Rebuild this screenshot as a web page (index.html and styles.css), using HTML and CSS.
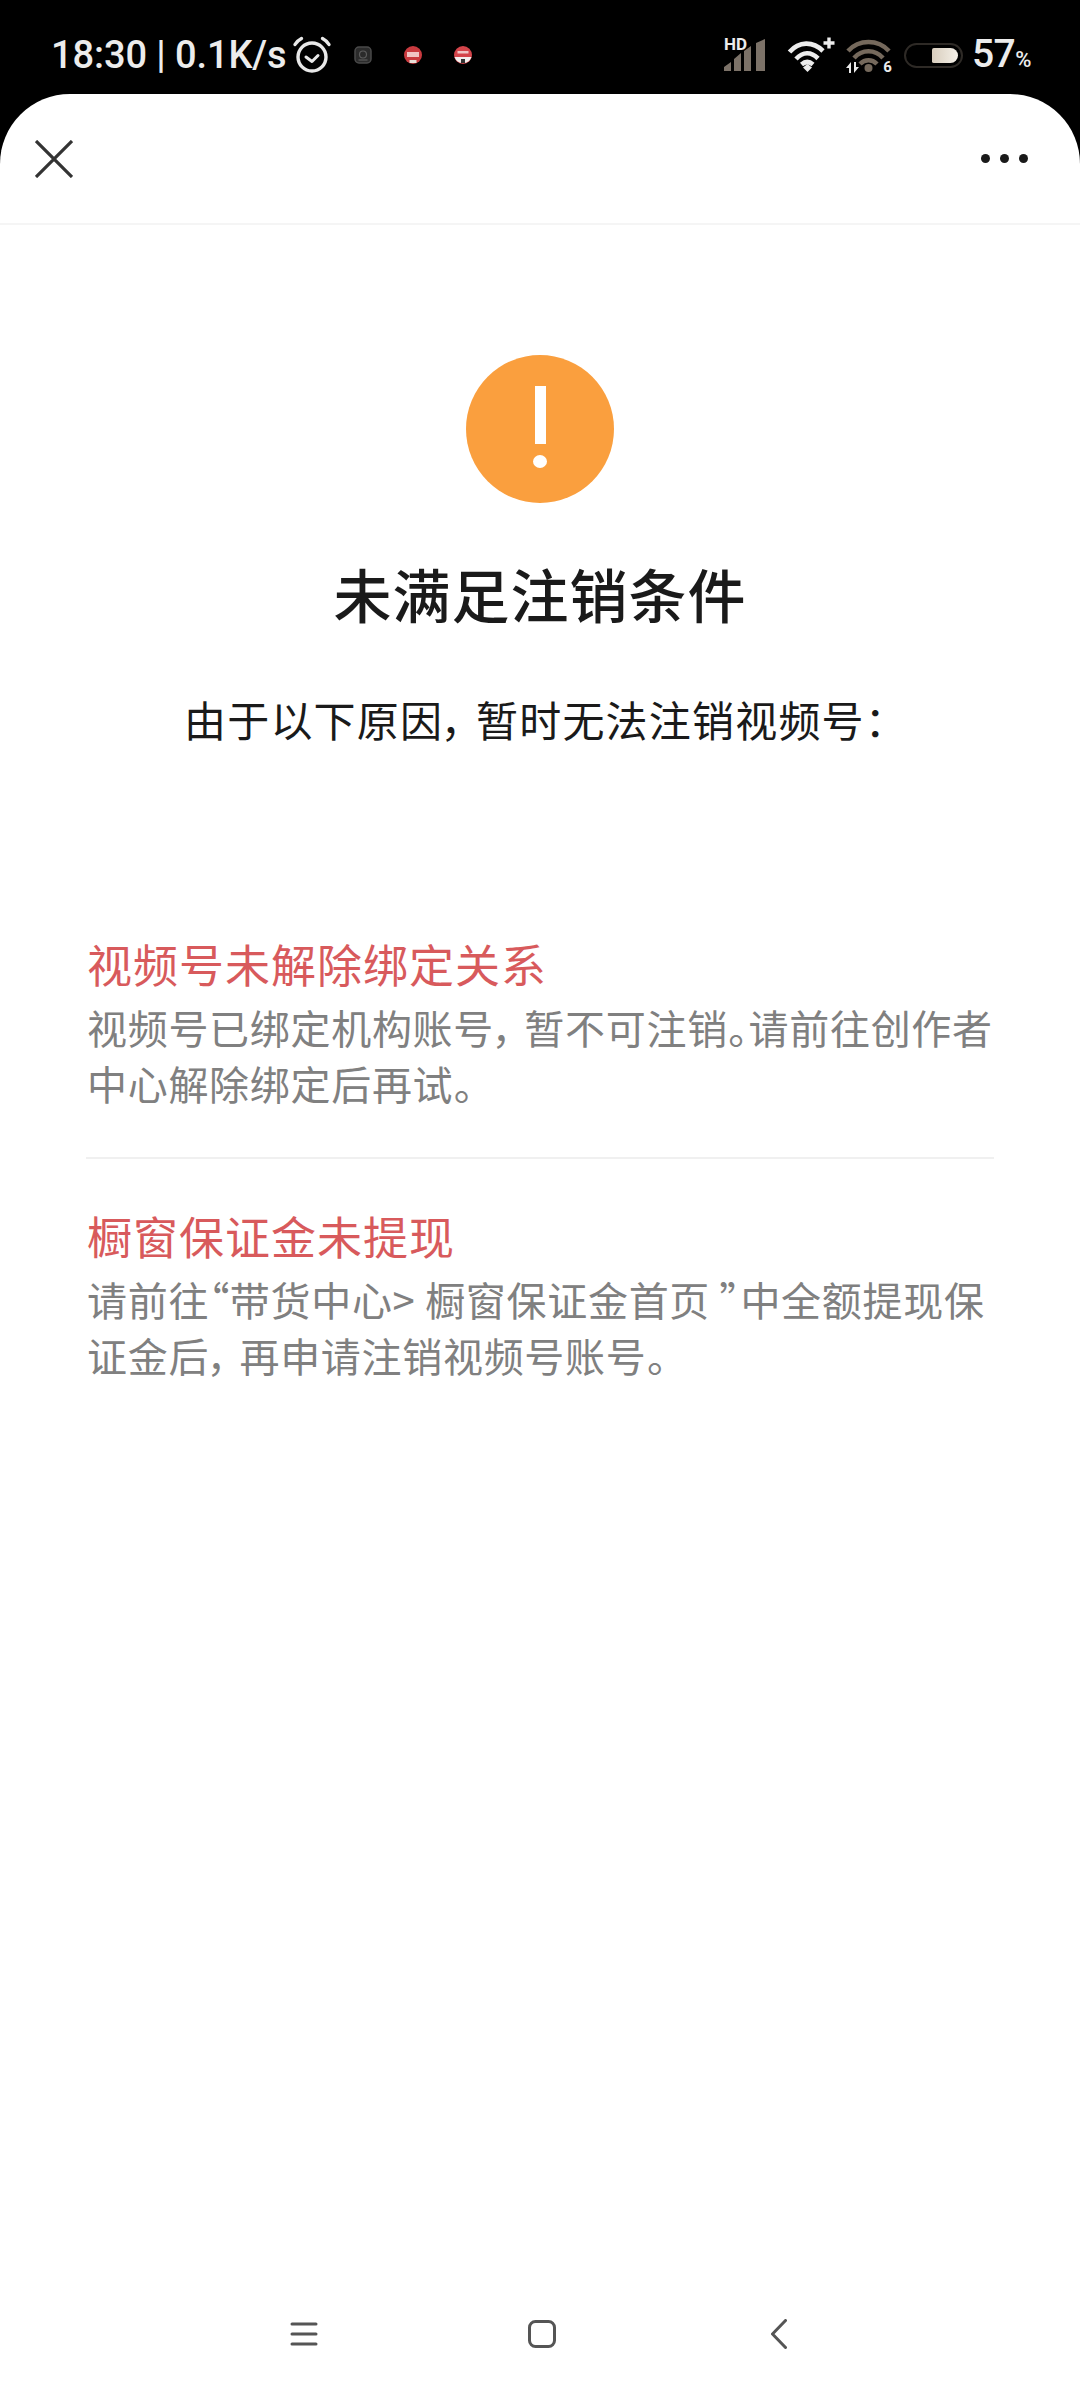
FILE: index.html

```html
<!DOCTYPE html>
<html lang="zh-CN">
  <head>
    <meta charset="UTF-8" />
    <meta name="viewport" content="width=device-width, initial-scale=1.0" />
    <title>未满足注销条件</title>
    <link rel="stylesheet" href="styles.css">
  </head>
  <body>
    <div class="screen">
      <div class="status">
        <div class="status-left">
          <span class="clock">18:30 | 0.1K/s</span>
          <svg class="alarm" width="40" height="40" viewBox="0 0 40 40" fill="none" stroke="#e8e8e8" stroke-linecap="round">
            <circle cx="20" cy="22" r="14" stroke-width="3.4" />
            <path d="M14 22l6 4.5 6-6" stroke-width="3" stroke-linejoin="round" />
            <path d="M3 9.5C4.5 7 7 4.800 9.500 3.500M37 9.500C35.500 7 33 4.800 30.500 3.500" stroke-width="3.400" />
          </svg>
          <svg class="note note-grey" width="18" height="18" viewBox="0 0 18 18" fill="none">
            <rect x="1" y="1" width="16" height="16" rx="4" fill="#2b2b2b" stroke="#4a4a4a" stroke-width="1.500" />
            <circle cx="9" cy="8.500" r="3.500" stroke="#5c5c5c" stroke-width="1.200" />
            <path d="M4.500 14h9" stroke="#5c5c5c" stroke-width="1.200" />
          </svg>
          <svg class="note" width="18" height="18" viewBox="0 0 18 18">
            <circle cx="9" cy="9" r="9" fill="#c93a3f" />
            <rect x="3" y="6" width="12" height="5" fill="#f0c4c4" />
            <rect x="5.500" y="14" width="7" height="3" fill="#e9e0d8" />
          </svg>
          <svg class="note" width="18" height="18" viewBox="0 0 18 18">
            <circle cx="9" cy="9" r="9" fill="#d4444a" />
            <path d="M0.500 11h17a9 9 0 0 1-17 0z" fill="#f3efee" />
            <rect x="3.500" y="5" width="11" height="2.500" fill="#f0c4c4" />
            <rect x="7" y="13" width="4" height="4" fill="#333" />
          </svg>
        </div>
        <div class="status-right">
          <div class="signal">
            <span class="hd">HD</span>
            <svg width="43" height="32" viewBox="0 0 43 32" fill="#7c7268">
              <path d="M0 32v-4l7-5v9zM10 32V20l7-6v18zM20 32V12l7-5v25zM32 32V4l9-4v32z" />
            </svg>
          </div>
          <svg class="wifi" width="49" height="36" viewBox="0 0 49 36" fill="none" stroke="#ececec" stroke-width="4.600">
            <path d="M2.500 15C12 4 26 4 36 14M9 22C16 14.500 24 14.500 31 21.500" />
            <path d="M14.500 27.500C18.500 24 22 24 26 27.500" />
            <path d="M16 30.500l4.500-3.500 4.500 3.500-4.500 4.500z" fill="#ececec" stroke="none" />
            <path d="M42 0.500v11M36.500 6h11" stroke-width="3.400" />
          </svg>
          <div class="wifi2">
            <svg width="45" height="35" viewBox="0 0 45 35" fill="none" stroke="#75695c" stroke-width="4.500">
              <path d="M2 13C13 1 32 1 43 13M8 20C16 11 29 11 37 20M14 26C19 21 26 21 31 26" />
              <circle cx="22.500" cy="30" r="4" fill="#75695c" stroke="none" />
            </svg>
            <span class="wifi-six">6</span>
            <svg class="wifi-arrows" width="13" height="11" viewBox="0 0 13 11" fill="#e8e8e8">
              <path d="M3 3v8h2V0L0 6h3zM10 8V0H8v11l5-6h-3z" />
            </svg>
          </div>
          <div class="battery"><div class="battery-fill"></div></div>
          <div class="percent">57<span class="percent-sign">%</span></div>
        </div>
      </div>

      <div class="sheet">
        <div class="topbar">
          <svg width="38" height="38" viewBox="0 0 38 38" stroke="#333" stroke-width="3.200">
            <path d="M1 1l36 36M37 1L1 37" />
          </svg>
          <div class="dots"><span></span><span></span><span></span></div>
        </div>

        <div class="content">
          <div class="warn">
            <div class="warn-bar"></div>
            <div class="warn-dot"></div>
          </div>
          <h1 class="title">未满足注销条件</h1>
          <p class="subtitle">由于以下原因， 暂时无法注销视频号：</p>

          <div class="reasons">
            <div class="reason">
              <h2>视频号未解除绑定关系</h2>
              <p>视频号已绑定机构账号， 暂不可注销。请前往创作者中心解除绑定后再试。</p>
            </div>
            <div class="reason">
              <h2>橱窗保证金未提现</h2>
              <p>请前往“带货中心&gt; 橱窗保证金首页 ”中全额提现保证金后， 再申请注销视频号账号。</p>
            </div>
          </div>
        </div>

        <div class="navbar">
          <svg width="28" height="24" viewBox="0 0 28 24" stroke="#555" stroke-width="3" stroke-linecap="round">
            <path d="M2 2h24M2 12h24M2 22h24" />
          </svg>
          <svg class="nav-home" width="28" height="28" viewBox="0 0 28 28" fill="none" stroke="#555" stroke-width="3">
            <rect x="1.500" y="1.500" width="25" height="25" rx="6" />
          </svg>
          <svg class="nav-back" width="16" height="30" viewBox="0 0 16 30" fill="none" stroke="#555" stroke-width="3" stroke-linecap="round" stroke-linejoin="round">
            <path d="M14.500 1.500L1.500 15l13 13.500" />
          </svg>
        </div>
      </div>
    </div>
  </body>
</html>
```

FILE: styles.css

```css
* {
  box-sizing: border-box;
}
body {
  margin: 0;
  background: #000;
  font-family: "Noto Sans CJK SC", "Noto Sans", sans-serif;
}
.screen {
  width: 1080px;
  height: 2400px;
  display: flex;
  flex-direction: column;
}

/* status bar */
.status {
  height: 94px;
  flex: none;
  display: flex;
  justify-content: space-between;
  align-items: center;
  padding: 16px 49px 0 51px;
  color: #ececec;
  font-family: Roboto, sans-serif;
}
.status-left,
.status-right {
  display: flex;
  align-items: center;
}
.clock {
  font-size: 38px;
  font-weight: 500;
  letter-spacing: -0.100px;
}
.alarm {
  margin-left: 5px;
}
.note {
  margin-left: 32px;
}
.note-grey {
  margin-left: 22px;
}
.signal {
  position: relative;
  width: 43px;
  height: 32px;
}
.hd {
  position: absolute;
  left: 0;
  top: -3px;
  font-size: 17px;
  font-weight: 700;
  line-height: 16px;
}
.signal svg {
  display: block;
}
.wifi {
  margin-left: 20px;
}
.wifi2 {
  position: relative;
  margin-left: 10px;
  width: 45px;
  height: 35px;
}
.wifi2 svg {
  display: block;
}
.wifi-six {
  position: absolute;
  right: -1px;
  bottom: -2px;
  font-size: 15px;
  font-weight: 700;
  line-height: 15px;
  background: #000;
  padding-left: 2px;
}
.wifi2 .wifi-arrows {
  position: absolute;
  left: 0;
  bottom: 0;
}
.battery {
  width: 59px;
  height: 25px;
  margin-left: 13px;
  padding: 3px 3px 3px 26px;
  border: 2px solid #2e2a26;
  border-radius: 13px;
}
.battery-fill {
  height: 100%;
  border-radius: 2px 8px 8px 2px;
  background: linear-gradient(90deg, #d8cdbd, #f4f0e8);
}
.percent {
  margin: 4px 0 0 9px;
  font-size: 39px;
  font-weight: 500;
  line-height: 40px;
  letter-spacing: -0.500px;
}
.percent-sign {
  font-size: 22px;
}

/* white sheet */
.sheet {
  flex: 1;
  display: flex;
  flex-direction: column;
  background: #fff;
  border-radius: 70px 70px 0 0;
}
.topbar {
  height: 131px;
  flex: none;
  display: flex;
  justify-content: space-between;
  align-items: center;
  padding: 0 52px 0 35px;
  border-bottom: 2px solid #f5f5f5;
}
.dots {
  display: flex;
  gap: 10px;
}
.dots span {
  width: 9px;
  height: 9px;
  border-radius: 50%;
  background: #1a1a1a;
}

.content {
  flex: 1;
  display: flex;
  flex-direction: column;
  align-items: center;
  padding-top: 130px;
}
.warn {
  width: 148px;
  height: 148px;
  display: flex;
  flex-direction: column;
  align-items: center;
  padding-top: 31px;
  border-radius: 50%;
  background: #fa9f3e;
}
.warn-bar {
  width: 11px;
  height: 58px;
  background: #fff;
}
.warn-dot {
  width: 14px;
  height: 13px;
  margin-top: 11px;
  border-radius: 50%;
  background: #fff;
}
.title {
  margin: 48px 0 0;
  font-size: 58px;
  font-weight: 500;
  line-height: 84px;
  letter-spacing: 1px;
  color: #1a1a1a;
}
.subtitle {
  margin: 54px 0 0;
  padding-right: 9px;
  font-size: 42px;
  line-height: 60px;
  font-feature-settings: "palt";
  letter-spacing: 1.200px;
  color: #1a1a1a;
}
.reasons {
  width: 908px;
  margin-top: 138px;
}
.reason {
  padding: 47px 0 46px;
  border-bottom: 2px solid #f0f0f0;
}
.reason:last-child {
  border-bottom: 0;
}
.reason h2 {
  margin: 0 0 5px;
  padding-left: 1px;
  font-size: 45px;
  font-weight: 400;
  line-height: 60px;
  letter-spacing: 1px;
  color: #d85a5c;
}
.reason p {
  margin: 0;
  padding-left: 1px;
  font-size: 40px;
  line-height: 56px;
  font-feature-settings: "palt";
  letter-spacing: 0.700px;
  color: #808080;
}

/* bottom nav */
.navbar {
  height: 132px;
  flex: none;
  display: flex;
  align-items: center;
  padding-left: 290px;
}
.nav-home {
  margin-left: 210px;
}
.nav-back {
  margin-left: 215px;
}
```
